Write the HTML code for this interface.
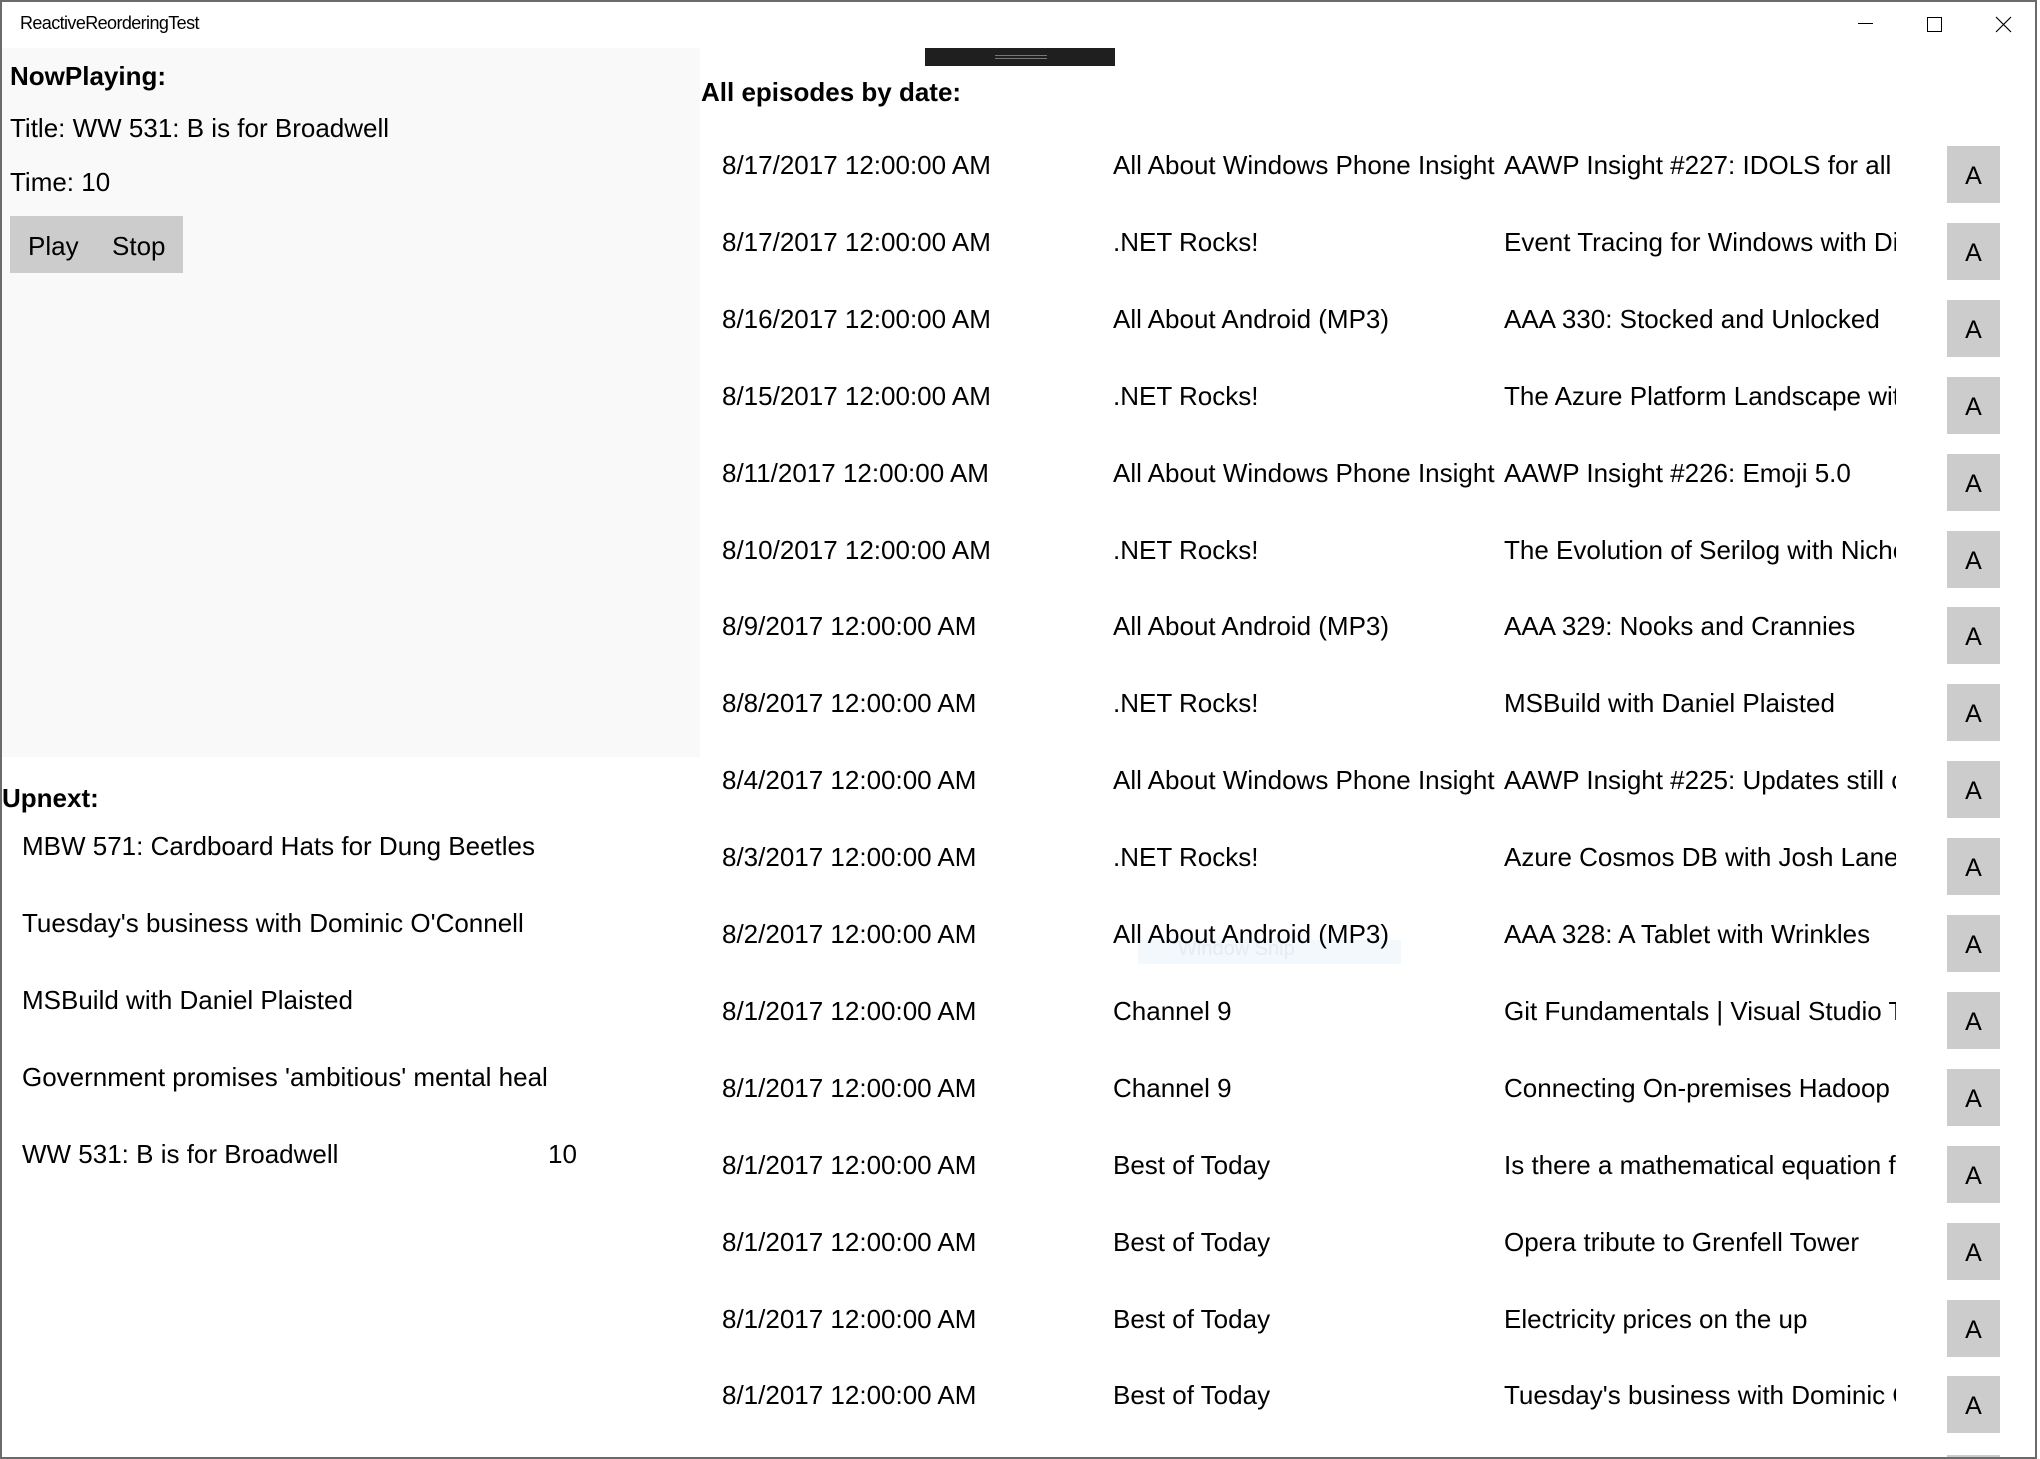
<!DOCTYPE html>
<html><head><meta charset="utf-8"><style>
*{margin:0;padding:0;box-sizing:border-box}
html,body{width:2040px;height:1459px;overflow:hidden}
body{background:#fff;font-family:"Liberation Sans",sans-serif;color:#000;position:relative}
.win{position:absolute;left:0;top:0;width:2037px;height:1459px;border:2px solid #6b6b6b}
.a{position:absolute;white-space:nowrap}
.t{font-size:26px;letter-spacing:0px;line-height:40px;height:40px;overflow:hidden}
.b{font-weight:bold}
.btn{position:absolute;left:1947px;width:53px;height:57px;background:#cccccc;font-size:25px;text-align:center;line-height:60px;overflow:hidden}
</style></head><body>
<div class="a" style="left:20px;top:13px;font-size:18px;letter-spacing:-0.6px">ReactiveReorderingTest</div>
<div class="a" style="left:1858px;top:23px;width:15px;height:1px;background:#000"></div>
<div class="a" style="left:1927px;top:17px;width:15px;height:15px;border:1px solid #000"></div>
<svg class="a" style="left:1995px;top:16px" width="17" height="17"><path d="M1 1L16 16M16 1L1 16" stroke="#000" stroke-width="1.2"/></svg>

<div class="a" style="left:2px;top:48px;width:698px;height:709px;background:#f9f9f9"></div>
<div class="a" style="left:925px;top:48px;width:190px;height:18px;background:#1f1f1f"></div>
<div class="a" style="left:995px;top:55px;width:52px;height:1px;background:#777"></div>
<div class="a" style="left:995px;top:58px;width:52px;height:1px;background:#777"></div>

<div class="a t b" style="left:10px;top:56px">NowPlaying:</div>
<div class="a t" style="left:10px;top:108px">Title: WW 531: B is for Broadwell</div>
<div class="a t" style="left:10px;top:162px">Time: 10</div>
<div class="a" style="left:10px;top:216px;width:173px;height:57px;background:#cccccc"></div>
<div class="a t" style="left:28px;top:226px">Play</div>
<div class="a t" style="left:112px;top:226px">Stop</div>

<div class="a t b" style="left:2px;top:778px">Upnext:</div>
<div class="a t" style="left:22px;top:826px">MBW 571: Cardboard Hats for Dung Beetles</div>
<div class="a t" style="left:22px;top:903px">Tuesday's business with Dominic O'Connell</div>
<div class="a t" style="left:22px;top:980px">MSBuild with Daniel Plaisted</div>
<div class="a t" style="left:22px;top:1057px;width:526px">Government promises 'ambitious' mental health</div>
<div class="a t" style="left:22px;top:1134px">WW 531: B is for Broadwell</div>
<div class="a t" style="left:548px;top:1134px">10</div>

<div class="a t b" style="left:701px;top:72px">All episodes by date:</div>

<div class="a" style="left:1138px;top:940px;width:263px;height:24px;background:#f3f8fd"></div>
<div class="a" style="left:1178px;top:938px;font-size:20px;color:#e3ebf3">Window Snip</div>

<div id="rows"></div>
<div class="win"></div>
<script>
var d=[["8/17/2017 12:00:00 AM","All About Windows Phone Insight","AAWP Insight #227: IDOLS for all"],
["8/17/2017 12:00:00 AM",".NET Rocks!","Event Tracing for Windows with Dina"],
["8/16/2017 12:00:00 AM","All About Android (MP3)","AAA 330: Stocked and Unlocked"],
["8/15/2017 12:00:00 AM",".NET Rocks!","The Azure Platform Landscape with"],
["8/11/2017 12:00:00 AM","All About Windows Phone Insight","AAWP Insight #226: Emoji 5.0"],
["8/10/2017 12:00:00 AM",".NET Rocks!","The Evolution of Serilog with Nicholas"],
["8/9/2017 12:00:00 AM","All About Android (MP3)","AAA 329: Nooks and Crannies"],
["8/8/2017 12:00:00 AM",".NET Rocks!","MSBuild with Daniel Plaisted"],
["8/4/2017 12:00:00 AM","All About Windows Phone Insight","AAWP Insight #225: Updates still coming"],
["8/3/2017 12:00:00 AM",".NET Rocks!","Azure Cosmos DB with Josh Lane"],
["8/2/2017 12:00:00 AM","All About Android (MP3)","AAA 328: A Tablet with Wrinkles"],
["8/1/2017 12:00:00 AM","Channel 9","Git Fundamentals | Visual Studio Toolbox"],
["8/1/2017 12:00:00 AM","Channel 9","Connecting On-premises Hadoop"],
["8/1/2017 12:00:00 AM","Best of Today","Is there a mathematical equation for"],
["8/1/2017 12:00:00 AM","Best of Today","Opera tribute to Grenfell Tower"],
["8/1/2017 12:00:00 AM","Best of Today","Electricity prices on the up"],
["8/1/2017 12:00:00 AM","Best of Today","Tuesday's business with Dominic O'Connell"]];
var h="";
for(var i=0;i<17;i++){var y=146+i*76.9;
h+='<div class="btn" style="top:'+y+'px">A</div>';
var r=d[i];
h+='<div class="a t" style="left:722px;top:'+(y-1)+'px">'+r[0]+'</div>';
h+='<div class="a t" style="left:1113px;top:'+(y-1)+'px;width:390px">'+r[1]+'</div>';
h+='<div class="a t" style="left:1504px;top:'+(y-1)+'px;width:392px">'+r[2]+'</div>';}
h+='<div class="btn" style="top:1455px;height:3px"></div>';
document.getElementById("rows").innerHTML=h;
</script>
</body></html>
